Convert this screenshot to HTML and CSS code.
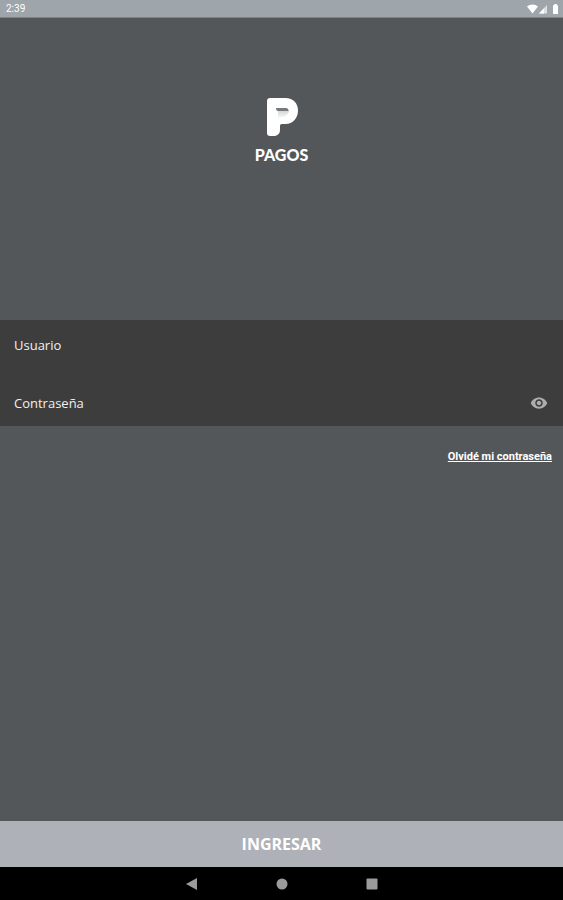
FILE: index.html
```html
<!DOCTYPE html>
<html lang="es">
<head>
  <meta charset="UTF-8" />
  <meta name="viewport" content="width=device-width, initial-scale=1.0"/>
  <title>Pagos</title>
  <link rel="stylesheet" href="styles.css">
</head>
<body>
  <header class="status-bar">
    <span>2:39</span>
    <svg class="status-icons" viewBox="0 0 32 12" aria-hidden="true">
      <path d="M0 3.6C3 .9 8 .9 11 3.6L5.5 10.5z"/>
      <path d="M12 10.5L20 2v8.5z" opacity=".65"/>
      <path d="M12 10.5l5-5.3v5.3z"/>
      <path d="M26 2.200h1.200V1h2.600v1.200H31v8.800h-5z"/>
    </svg>
  </header>

  <form class="login" onsubmit="return false">
    <div class="brand">
      <svg class="logo" viewBox="0 0 32 39" aria-hidden="true">
        <defs>
          <linearGradient id="fold" x1="0" y1="0" x2="0" y2="1">
            <stop offset="0" stop-color="#cfd1d2"/>
            <stop offset="1" stop-color="#fff"/>
          </linearGradient>
        </defs>
        <path fill="#fff" d="M4 0h15.500C27 0 32 5 32 12.500S27 26 19.500 26H16c-1.500 0-2 .8-2 2v4c0 3.500-2.500 6-6 6H4c-2 0-3-1-3-3V3c0-2 1-3 3-3z"/>
        <path fill="url(#fold)" d="M12 12h11c0 4-3 6.500-7 7-2 .3-3 1-4 2z"/>
        <path fill="#77797b" d="M10 10h10c1.500 0 2.500 1 2.500 3H12c-1.300 0-2-1-2-3z"/>
      </svg>
      <h1>PAGOS</h1>
    </div>

    <div class="fields">
      <div class="field">
        <input type="text" id="usuario" placeholder="Usuario" aria-label="Usuario">
      </div>
      <div class="field">
        <input type="password" id="contrasena" placeholder="Contraseña" aria-label="Contraseña">
        <button type="button" class="toggle" aria-label="Mostrar contraseña" onclick="togglePassword()">
          <svg viewBox="0 0 24 24" aria-hidden="true">
            <path d="M12 4.500C7 4.500 2.730 7.610 1 12c1.730 4.390 6 7.500 11 7.500s9.270-3.110 11-7.500c-1.730-4.390-6-7.500-11-7.500zM12 17c-2.760 0-5-2.240-5-5s2.240-5 5-5 5 2.240 5 5-2.240 5-5 5zm0-8c-1.660 0-3 1.340-3 3s1.340 3 3 3 3-1.340 3-3-1.340-3-3-3z"/>
          </svg>
        </button>
      </div>
    </div>

    <a class="forgot" href="#">Olvidé mi contraseña</a>

    <button type="submit" class="submit">INGRESAR</button>
  </form>

  <nav class="nav-bar">
    <button type="button" aria-label="Atrás">
      <svg viewBox="0 0 14 14"><path d="M12 1v12L1 7z"/></svg>
    </button>
    <button type="button" aria-label="Inicio">
      <svg viewBox="0 0 14 14"><circle cx="7" cy="7" r="5.5"/></svg>
    </button>
    <button type="button" aria-label="Recientes">
      <svg viewBox="0 0 14 14"><rect x="1.5" y="1.5" width="11" height="11" rx="1"/></svg>
    </button>
  </nav>

  <script>
    function togglePassword() {
      const input = document.getElementById('contrasena');
      input.type = input.type === 'password' ? 'text' : 'password';
    }
  </script>
</body>
</html>
```

FILE: styles.css
```css
* { box-sizing: border-box; }

body {
  margin: 0;
  min-height: 100vh;
  display: flex;
  flex-direction: column;
  background: #53575a;
  color: #fff;
  font-family: 'Open Sans', sans-serif;
}

button {
  border: none;
  background: none;
  padding: 0;
  cursor: pointer;
}

svg { display: block; }

.status-bar {
  display: flex;
  align-items: center;
  justify-content: space-between;
  height: 18px;
  padding: 0 4px 0 6px;
  background: #9ea5ab;
  border-bottom: 1px solid #7b8185;
  font-family: Roboto, sans-serif;
  font-size: 10px;
}

.status-icons {
  width: 32px;
  height: 12px;
  fill: #fff;
}

.login {
  flex: 1;
  display: flex;
  flex-direction: column;
}

.brand {
  display: flex;
  flex-direction: column;
  align-items: center;
  padding: 80px 0 156px;
}

.logo {
  width: 32px;
  height: 39px;
}

.brand h1 {
  margin: 8px 0 0;
  font-family: Lato, sans-serif;
  font-size: 16px;
  font-weight: 900;
  line-height: 19px;
}

.fields {
  display: flex;
  flex-direction: column;
  gap: 12px;
  padding: 2px 0 0;
  background: #3d3d3d;
}

.field {
  display: flex;
  align-items: center;
  height: 46px;
  padding: 0 15px 0 14px;
}

.field input {
  flex: 1;
  min-width: 0;
  height: 100%;
  padding: 0;
  border: none;
  outline: none;
  background: none;
  color: #fff;
  font-family: 'Open Sans', sans-serif;
  font-size: 13px;
}

.field input::placeholder {
  color: #f0f0f0;
  opacity: 1;
}

.toggle svg {
  width: 18px;
  height: 18px;
  fill: #adadad;
}

.forgot {
  align-self: flex-end;
  margin: 22px 11px 0;
  color: #fff;
  font-family: Roboto, sans-serif;
  font-size: 11px;
  font-weight: bold;
  line-height: 18px;
}

.submit {
  height: 46px;
  margin-top: auto;
  background: #aeb2b8;
  color: #fff;
  font-family: 'Open Sans', sans-serif;
  font-size: 16px;
  font-weight: bold;
}

.nav-bar {
  display: flex;
  justify-content: center;
  align-items: center;
  gap: 76px;
  height: 33px;
  background: #000;
}

.nav-bar svg {
  width: 14px;
  height: 14px;
  fill: #9b9b9b;
}
```
